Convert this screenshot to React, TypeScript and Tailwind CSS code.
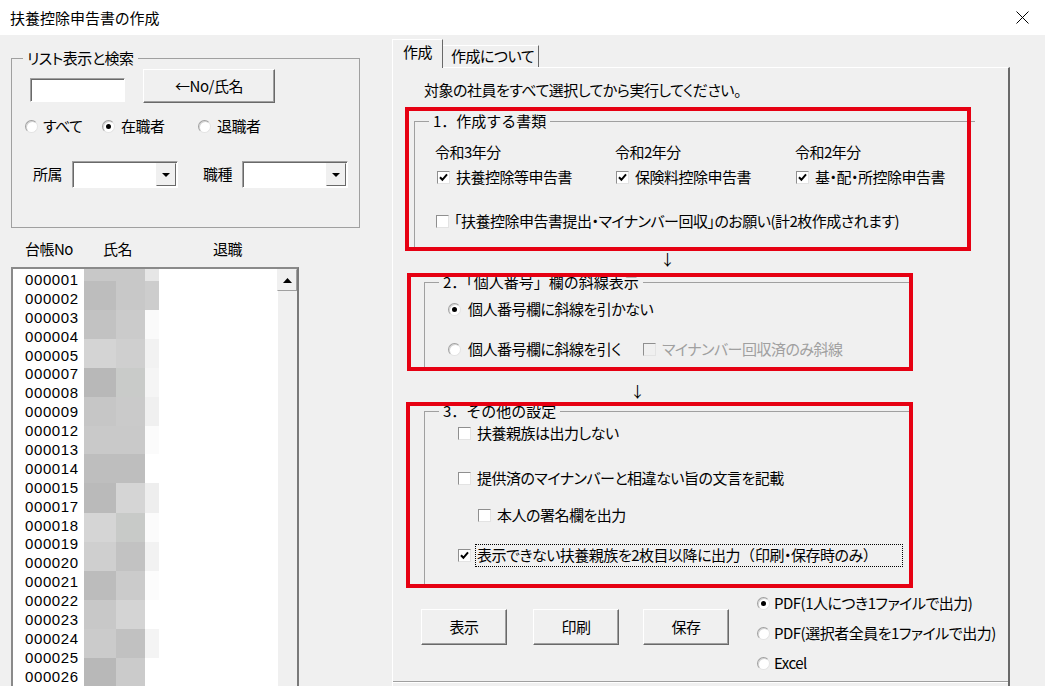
import React from 'react';

// 社員リスト(台帳No)
const employeeNos = [
  '000001', '000002', '000003', '000004', '000005', '000007', '000008', '000009',
  '000012', '000013', '000014', '000015', '000017', '000018', '000019', '000020',
  '000021', '000022', '000023', '000024', '000025', '000026',
];

// 氏名欄のモザイク (行の高さ, 3列の色)
const mosaic: { h: number; c: [string, string, string] }[] = [
  { h: 12, c: ['#c8c8c8', '#c8c8c8', '#e6e6e6'] },
  { h: 29, c: ['#bdbdbd', '#c8c8c8', '#cdcdcd'] },
  { h: 29, c: ['#c2c2c2', '#cbcbcb', '#fafafa'] },
  { h: 29, c: ['#d4d4d4', '#cfcfcf', '#f2f2f2'] },
  { h: 29, c: ['#b8b8b8', '#c9cbc9', '#f5f5f5'] },
  { h: 29, c: ['#c6c6c6', '#cacaca', '#f0f0f0'] },
  { h: 28, c: ['#c9c9c9', '#c9c9c9', '#fbfbfb'] },
  { h: 29, c: ['#bebebe', '#bebebe', '#ffffff'] },
  { h: 30, c: ['#bababa', '#d5d5d5', '#eeeeee'] },
  { h: 29, c: ['#d5d5d5', '#c8cac8', '#fbfbfb'] },
  { h: 29, c: ['#cfcfcf', '#c2c2c2', '#f2f2f2'] },
  { h: 29, c: ['#bcbcbc', '#cbcbcb', '#fcfcfc'] },
  { h: 29, c: ['#c8c8c8', '#d4d4d4', '#ffffff'] },
  { h: 29, c: ['#cbcbcb', '#c1c1c1', '#f4f4f4'] },
  { h: 29, c: ['#b8b8b8', '#cbcbcb', '#ffffff'] },
];

const Radio = ({ checked = false }: { checked?: boolean }) => (
  <span className="flex h-[13px] w-[13px] shrink-0 items-center justify-center rounded-full border border-[#a0a0a0] border-b-[#e3e3e3] border-r-[#e3e3e3] bg-white shadow-[inset_1px_1px_0_#d4d4d4]">
    {checked && <span className="h-[5px] w-[5px] rounded-full bg-black" />}
  </span>
);

const Check = ({ checked = false, disabled = false }: { checked?: boolean; disabled?: boolean }) => (
  <span
    className={`flex h-[13px] w-[13px] shrink-0 items-center justify-center border border-[#8f8f8f] border-b-[#e3e3e3] border-r-[#e3e3e3] ${
      disabled ? 'bg-[#f0f0f0]' : 'bg-white'
    }`}
  >
    {checked && (
      <svg width="9" height="9" viewBox="0 0 9 9">
        <path d="M1 4.2 L3.4 6.8 L8 1.4" fill="none" stroke="#000" strokeWidth="2" />
      </svg>
    )}
  </span>
);

const Btn = ({ children, className = '' }: { children: React.ReactNode; className?: string }) => (
  <button
    className={`flex items-center justify-center border border-white border-b-[#696969] border-r-[#696969] bg-[#f0f0f0] shadow-[inset_-1px_-1px_0_#a0a0a0] ${className}`}
  >
    {children}
  </button>
);

const Combo = () => (
  <div className="flex h-[27px] w-[106px] border border-[#a0a0a0] border-b-white border-r-white bg-white p-[1px] shadow-[inset_1px_1px_0_#696969]">
    <div className="flex-1" />
    <div className="flex w-[20px] items-center justify-center border border-[#f0f0f0] border-b-[#696969] border-r-[#696969] bg-[#f0f0f0]">
      <svg width="8" height="4" viewBox="0 0 8 4">
        <path d="M0 0 H8 L4 4 Z" fill="#000" />
      </svg>
    </div>
  </div>
);

const RedBox = ({ className = '', children }: { className?: string; children: React.ReactNode }) => (
  <div className={`relative ${className}`}>
    {children}
    <div className="pointer-events-none absolute inset-0 border-4 border-[#e60012]" />
  </div>
);

const Legend = ({ children }: { children: React.ReactNode }) => (
  <legend className="ml-[14px] px-[4px] leading-[18px] tracking-normal [font-feature-settings:normal]">{children}</legend>
);

const LeftPane = () => (
  <div className="w-[392px] shrink-0 pl-[11px]">
    <fieldset className="mt-[14px] h-[179px] w-[349px] border border-[#a0a0a0]">
      <legend className="ml-[11px] px-[4px] leading-[18px]">リスト表示と検索</legend>
      <div className="flex items-start">
        <div className="ml-[18px] mt-[11px] h-[24px] w-[95px] border border-[#a0a0a0] border-b-white border-r-white bg-white shadow-[inset_1px_1px_0_#696969]" />
        <Btn className="ml-[18px] mt-[2px] h-[34px] w-[132px]">←No/氏名</Btn>
      </div>
      <div className="ml-[13px] mt-[13px] flex h-[20px] items-center">
        <div className="flex w-[77px] items-center gap-[5px]">
          <Radio />
          <span>すべて</span>
        </div>
        <div className="flex w-[96px] items-center gap-[6px]">
          <Radio checked />
          <span>在職者</span>
        </div>
        <div className="flex items-center gap-[6px]">
          <Radio />
          <span>退職者</span>
        </div>
      </div>
      <div className="mt-[25px] flex items-center">
        <span className="ml-[21px] w-[39px]">所属</span>
        <Combo />
        <span className="ml-[25px] w-[39px]">職種</span>
        <Combo />
      </div>
    </fieldset>

    <div className="mt-[11px] flex h-[20px] items-center pl-[14px]">
      <span className="w-[78px]">台帳No</span>
      <span className="w-[110px]">氏名</span>
      <span>退職</span>
    </div>

    <div className="relative mt-[8px] flex h-[430px] w-[288px] overflow-hidden border-2 border-[#8a8a8a] border-b-[#e3e3e3] border-r-[#7a7a7a]">
      <div className="flex-1 bg-white pl-[12px] pt-[2px] tracking-[0.6px] [font-family:'Liberation_Sans',sans-serif]">
        {employeeNos.map((no) => (
          <div key={no} className="h-[18.9px] leading-[18.9px]">
            {no}
          </div>
        ))}
      </div>
      <div className="w-[20px] bg-[#f0f0f0]">
        <div className="flex h-[22px] items-center justify-center border border-[#f0f0f0] border-b-[#a0a0a0] border-r-[#a0a0a0] bg-[#f0f0f0]">
          <svg width="9" height="5" viewBox="0 0 9 5">
            <path d="M0 5 H9 L4.5 0 Z" fill="#000" />
          </svg>
        </div>
        <div className="h-full border-l border-white" />
      </div>
      {/* 氏名のモザイク */}
      <div className="absolute left-[71px] top-0">
        {mosaic.map((row, i) => (
          <div key={i} className="flex">
            <div className="w-[32px]" style={{ height: row.h, background: row.c[0] }} />
            <div className="w-[29px]" style={{ height: row.h, background: row.c[1] }} />
            <div className="w-[14px]" style={{ height: row.h, background: row.c[2] }} />
          </div>
        ))}
      </div>
    </div>
  </div>
);

const RightPane = () => (
  <div className="w-[618px] shrink-0">
    {/* タブ */}
    <div className="mt-[4px] flex h-[28px] items-end">
      <div className="relative z-10 -mb-px h-[29px] w-[51px] border border-b-0 border-white border-r-[#696969] bg-[#f0f0f0] pl-[10px] pt-[2px] leading-[20px]">
        作成
      </div>
      <div className="h-[22px] w-[96px] whitespace-nowrap border-r border-t border-white border-r-[#696969] pl-[8px] leading-[20px]">
        作成について
      </div>
    </div>

    <div className="h-[640px] border-l border-t border-white border-r-2 border-r-[#696969]">
      <p className="pl-[31px] pt-[12px] leading-[20px]">対象の社員をすべて選択してから実行してください。</p>

      {/* 1. 作成する書類 */}
      <RedBox className="ml-[12px] mt-[7px] h-[144px] w-[566px] pl-[9px] pt-[5px]">
        <fieldset className="h-full w-full border-l border-t border-[#a0a0a0]">
          <Legend>1．作成する書類</Legend>
          <div className="mt-[12px] grid grid-cols-[180px_180px_180px] pl-[20px] leading-[20px]">
            <span>令和3年分</span>
            <span>令和2年分</span>
            <span>令和2年分</span>
          </div>
          <div className="mt-[5px] grid grid-cols-[180px_180px_180px] pl-[20px] leading-[20px]">
            <div className="flex items-center gap-[6px] pl-[2px]">
              <Check checked />
              <span>扶養控除等申告書</span>
            </div>
            <div className="flex items-center gap-[6px] pl-[1px]">
              <Check checked />
              <span>保険料控除申告書</span>
            </div>
            <div className="flex items-center gap-[6px] pl-[1px]">
              <Check checked />
              <span>基・配・所控除申告書</span>
            </div>
          </div>
          <div className="mt-[24px] flex items-center gap-[5px] pl-[21px] leading-[20px]">
            <Check />
            <span>「扶養控除申告書提出・マイナンバー回収」のお願い(計2枚作成されます)</span>
          </div>
        </fieldset>
      </RedBox>

      <div className="h-[22px] pl-[267px] leading-[16px]">↓</div>

      {/* 2. 個人番号欄の斜線表示 */}
      <RedBox className="ml-[14px] h-[98px] w-[506px] pl-[17px]">
        <fieldset className="h-full w-full border-l border-t border-[#a0a0a0]">
          <Legend>2．「個人番号」欄の斜線表示</Legend>
          <div className="mt-[8px] flex h-[20px] items-center gap-[7px] pl-[23px]">
            <Radio checked />
            <span>個人番号欄に斜線を引かない</span>
          </div>
          <div className="mt-[20px] flex h-[20px] items-center pl-[23px]">
            <div className="flex w-[195px] items-center gap-[7px]">
              <Radio />
              <span>個人番号欄に斜線を引く</span>
            </div>
            <div className="flex items-center gap-[6px] text-[#a0a0a0]">
              <Check disabled />
              <span>マイナンバー回収済のみ斜線</span>
            </div>
          </div>
        </fieldset>
      </RedBox>

      <div className="h-[32px] pl-[237px] pt-[12px] leading-[16px]">↓</div>

      {/* 3. その他の設定 */}
      <RedBox className="ml-[13px] h-[186px] w-[507px] pl-[18px]">
        <fieldset className="-mt-[1px] h-full w-full border-l border-t border-[#a0a0a0]">
          <Legend>3．その他の設定</Legend>
          <div className="mt-[3px] flex h-[20px] items-center gap-[6px] pl-[33px]">
            <Check />
            <span>扶養親族は出力しない</span>
          </div>
          <div className="mt-[25px] flex h-[20px] items-center gap-[6px] pl-[33px]">
            <Check />
            <span>提供済のマイナンバーと相違ない旨の文言を記載</span>
          </div>
          <div className="mt-[17px] flex h-[20px] items-center gap-[6px] pl-[53px]">
            <Check />
            <span>本人の署名欄を出力</span>
          </div>
          <div className="mt-[19px] flex h-[23px] items-center gap-[4px] pl-[33px]">
            <Check checked />
            <span className="flex h-[23px] w-[428px] items-center border border-dotted border-black pl-[1px]">
              表示できない扶養親族を2枚目以降に出力<span className="tracking-normal [font-feature-settings:normal]">（</span>印刷・保存時のみ
              <span className="tracking-normal [font-feature-settings:normal]">）</span>
            </span>
          </div>
        </fieldset>
      </RedBox>

      <div className="flex items-start">
        <Btn className="ml-[28px] mt-[21px] h-[36px] w-[86px]">表示</Btn>
        <Btn className="ml-[26px] mt-[21px] h-[36px] w-[86px]">印刷</Btn>
        <Btn className="ml-[24px] mt-[21px] h-[36px] w-[86px]">保存</Btn>
        <div className="ml-[28px] mt-[5px] flex flex-col gap-[10px] leading-[20px]">
          <div className="flex items-center gap-[4px]">
            <Radio checked />
            <span>PDF(1人につき1ファイルで出力)</span>
          </div>
          <div className="flex items-center gap-[4px]">
            <Radio />
            <span>PDF(選択者全員を1ファイルで出力)</span>
          </div>
          <div className="flex items-center gap-[4px]">
            <Radio />
            <span>Excel</span>
          </div>
        </div>
      </div>

      <div className="mt-[8px] border-b border-t border-[#a0a0a0] border-b-white" />
    </div>
  </div>
);

export default function App() {
  return (
    <div className="h-[686px] w-[1045px] overflow-hidden bg-[#f0f0f0] text-[15px] tracking-[-0.5px] text-black [font-family:'Noto_Sans_CJK_JP',sans-serif] [font-feature-settings:'palt']">
      <div className="flex h-[35px] items-center justify-between bg-white pl-[10px] pr-[16px]">
        <span className="leading-none tracking-normal">扶養控除申告書の作成</span>
        <svg width="13" height="13" viewBox="0 0 13 13">
          <path d="M0.5 0.5 L12.5 12.5 M12.5 0.5 L0.5 12.5" stroke="#000" strokeWidth="1" />
        </svg>
      </div>
      <div className="flex">
        <LeftPane />
        <RightPane />
      </div>
    </div>
  );
}
